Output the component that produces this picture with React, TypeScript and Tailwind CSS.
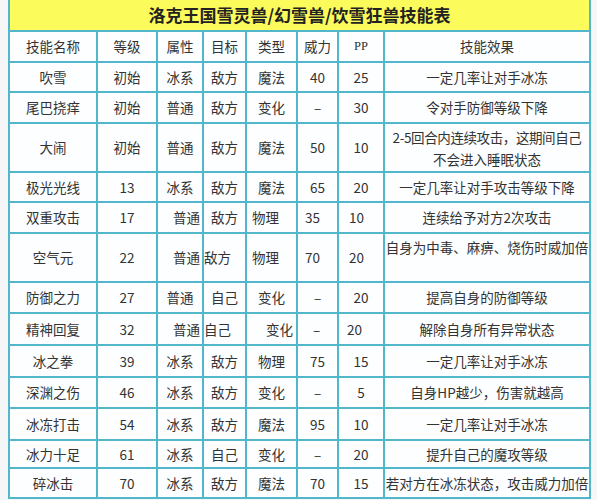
import React from "react";

type C = { t: React.ReactNode; c?: string };
type Row = { h: string; cells: C[] };

const rows: Row[] = [
  { h: "h-[28px]", cells: [{ t: "吹雪" }, { t: "初始" }, { t: "冰系" }, { t: "敌方" }, { t: "魔法" }, { t: "40" }, { t: "25" }, { t: "一定几率让对手冰冻" }] },
  { h: "h-[29px]", cells: [{ t: "尾巴挠痒" }, { t: "初始" }, { t: "普通" }, { t: "敌方" }, { t: "变化" }, { t: "–" }, { t: "30" }, { t: "令对手防御等级下降" }] },
  {
    h: "h-[47px]",
    cells: [
      { t: "大闹" }, { t: "初始" }, { t: "普通" }, { t: "敌方" }, { t: "魔法" }, { t: "50" }, { t: "10" },
      {
        t: (
          <span className="block text-center leading-[22px] whitespace-nowrap">
            <span className="tracking-[-0.4px]">2-5回合内连续攻击，这期间自己</span>
            <br />
            不会进入睡眠状态
          </span>
        ),
      },
    ],
  },
  { h: "h-[28px]", cells: [{ t: "极光光线" }, { t: "13" }, { t: "冰系" }, { t: "敌方" }, { t: "魔法" }, { t: "65" }, { t: "20" }, { t: "一定几率让对手攻击等级下降" }] },
  {
    h: "h-[29px]",
    cells: [
      { t: "双重攻击" }, { t: "17" }, { t: "普通", c: "justify-end pr-[2px]" }, { t: "敌方" }, { t: "物理", c: "justify-start pl-[5px]" },
      { t: "35", c: "justify-start pl-[7px]" }, { t: "10", c: "justify-start pl-[10px]" }, { t: "连续给予对方2次攻击" },
    ],
  },
  {
    h: "h-[47px]",
    cells: [
      { t: "空气元" }, { t: "22" }, { t: "普通", c: "justify-end pr-[2px]" }, { t: "敌方", c: "justify-start pl-0" }, { t: "物理", c: "justify-start pl-[5px]" },
      { t: "70", c: "justify-start pl-[7px]" }, { t: "20", c: "justify-start pl-[10px]" },
      { t: "自身为中毒、麻痹、烧伤时威加倍", c: "items-start pt-[3px] whitespace-nowrap" },
    ],
  },
  { h: "h-[29px]", cells: [{ t: "防御之力" }, { t: "27" }, { t: "普通" }, { t: "自己" }, { t: "变化" }, { t: "–" }, { t: "20" }, { t: "提高自身的防御等级" }] },
  {
    h: "h-[30px]",
    cells: [
      { t: "精神回复" }, { t: "32" }, { t: "普通", c: "justify-end pr-[2px]" }, { t: "自己", c: "justify-start pl-0" }, { t: "变化", c: "justify-end pr-[3px]" },
      { t: "–", c: "justify-start pl-[15px]" }, { t: "20", c: "justify-start pl-[8px]" }, { t: "解除自身所有异常状态" },
    ],
  },
  { h: "h-[30px]", cells: [{ t: "冰之拳" }, { t: "39" }, { t: "冰系" }, { t: "敌方" }, { t: "物理" }, { t: "75" }, { t: "15" }, { t: "一定几率让对手冰冻" }] },
  { h: "h-[29px]", cells: [{ t: "深渊之伤" }, { t: "46" }, { t: "冰系" }, { t: "敌方" }, { t: "变化" }, { t: "–" }, { t: "5" }, { t: "自身HP越少，伤害就越高" }] },
  { h: "h-[30px]", cells: [{ t: "冰冻打击" }, { t: "54" }, { t: "冰系" }, { t: "敌方" }, { t: "魔法" }, { t: "95" }, { t: "10" }, { t: "一定几率让对手冰冻" }] },
  { h: "h-[26px]", cells: [{ t: "冰力十足" }, { t: "61" }, { t: "冰系" }, { t: "自己" }, { t: "变化" }, { t: "–" }, { t: "20" }, { t: "提升自己的魔攻等级" }] },
  { h: "h-[28px]", cells: [{ t: "碎冰击" }, { t: "70" }, { t: "冰系" }, { t: "敌方" }, { t: "魔法" }, { t: "70" }, { t: "15" }, { t: "若对方在冰冻状态，攻击威力加倍", c: "whitespace-nowrap" }] },
];

const headers: C[] = [
  { t: "技能名称" }, { t: "等级" }, { t: "属性" }, { t: "目标" }, { t: "类型" }, { t: "威力" },
  { t: <span className="font-['Liberation_Serif','Noto_Sans_CJK_SC',serif] text-[12.5px]">PP</span> },
  { t: "技能效果" },
];

function Cell({ cell, h }: { cell: C; h: string }) {
  return (
    <div className={`flex items-center justify-center bg-[#fcfeff] ${h} ${cell.c ?? ""}`}>
      {cell.t}
    </div>
  );
}

export default function App() {
  return (
    <div className="w-[597px] h-[500px] bg-[#f4f6f7] font-['Noto_Sans_CJK_SC',sans-serif] text-[13.5px] text-[#333] overflow-hidden">
      <div className="ml-[8px] w-[583px] bg-[#53b7cb] px-[2px] pb-[2px] grid grid-cols-[86px_58px_44px_41px_49px_39px_44px_204px] gap-[2px]">
        <div className="col-span-8 h-[30px] bg-[#fbfb5c] flex items-center justify-center text-[17px] font-bold text-[#222]">
          洛克王国雪灵兽/幻雪兽/饮雪狂兽技能表
        </div>
        {headers.map((c, i) => (
          <Cell key={`h${i}`} cell={c} h="h-[29px]" />
        ))}
        {rows.map((r, ri) =>
          r.cells.map((c, ci) => <Cell key={`${ri}-${ci}`} cell={c} h={r.h} />)
        )}
      </div>
    </div>
  );
}
